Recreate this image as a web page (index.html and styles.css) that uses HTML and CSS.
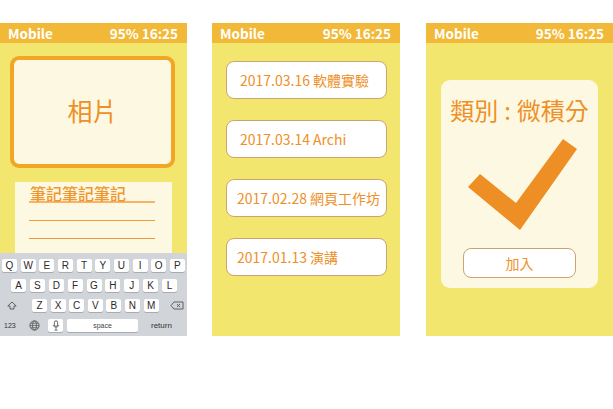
FILE: index.html
```html
<!DOCTYPE html>
<html lang="zh-Hant">
<head>
<meta charset="utf-8">
<title>Mobile screens</title>
<link rel="stylesheet" href="styles.css">
</head>
<body>
<div class="page">
  <section class="phone phone-notes">
    <div class="status"><span>Mobile</span><span>95% 16:25</span></div>
    <div class="photo"><span>相片</span></div>
    <div class="notes">
      <div class="note-line first">筆記筆記筆記</div>
      <div class="note-line"></div>
      <div class="note-line"></div>
    </div>
    <div class="keyboard">
      <div class="kb-row r1">
        <span class="key">Q</span><span class="key">W</span><span class="key">E</span><span class="key">R</span><span class="key">T</span><span class="key">Y</span><span class="key">U</span><span class="key">I</span><span class="key">O</span><span class="key">P</span>
      </div>
      <div class="kb-row r2">
        <span class="key">A</span><span class="key">S</span><span class="key">D</span><span class="key">F</span><span class="key">G</span><span class="key">H</span><span class="key">J</span><span class="key">K</span><span class="key">L</span>
      </div>
      <div class="kb-row r3">
        <svg class="kb-icon shift" width="10" height="9" viewBox="0 0 10 9"><path d="M5 1 L9.2 5 H7 V8 H3 V5 H0.8 Z" fill="none" stroke="#555" stroke-width="0.9" stroke-linejoin="round"/></svg>
        <span class="key">Z</span><span class="key">X</span><span class="key">C</span><span class="key">V</span><span class="key">B</span><span class="key">N</span><span class="key">M</span>
        <svg class="kb-icon del" width="14" height="9" viewBox="0 0 14 9"><path d="M4 1 H13 V8 H4 L1 4.5 Z" fill="none" stroke="#555" stroke-width="0.9" stroke-linejoin="round"/><path d="M7 3 L10 6 M10 3 L7 6" stroke="#555" stroke-width="0.9"/></svg>
      </div>
      <div class="kb-row r4">
        <span class="kb-label num">123</span>
        <svg class="kb-icon globe" width="11" height="11" viewBox="0 0 11 11"><circle cx="5.5" cy="5.5" r="4.6" fill="none" stroke="#555" stroke-width="0.9"/><ellipse cx="5.5" cy="5.5" rx="2" ry="4.6" fill="none" stroke="#555" stroke-width="0.8"/><path d="M1 5.5 H10 M1.8 3.3 H9.2 M1.8 7.7 H9.2" stroke="#555" stroke-width="0.7"/></svg>
        <span class="key mic"><svg width="8" height="11" viewBox="0 0 8 11"><rect x="2.4" y="0.8" width="3.2" height="5.6" rx="1.6" fill="none" stroke="#555" stroke-width="0.9"/><path d="M1 5 Q4 10 7 5 M4 8 V10 M2.5 10.2 H5.5" fill="none" stroke="#555" stroke-width="0.8"/></svg></span>
        <span class="key space">space</span>
        <span class="kb-label ret">return</span>
      </div>
    </div>
  </section>

  <section class="phone phone-list">
    <div class="status"><span>Mobile</span><span>95% 16:25</span></div>
    <ul class="entries">
      <li class="entry">2017.03.16 軟體實驗</li>
      <li class="entry">2017.03.14 Archi</li>
      <li class="entry entry-tight">2017.02.28 網頁工作坊</li>
      <li class="entry entry-tight">2017.01.13 演講</li>
    </ul>
  </section>

  <section class="phone phone-category">
    <div class="status"><span>Mobile</span><span>95% 16:25</span></div>
    <div class="card">
      <h2 class="cat-title">類別<span class="colon">:</span>微積分</h2>
      <svg class="check" width="157" height="115" viewBox="0 0 157 115"><polygon points="27,62 39,49 75,78 122,14 136,24 79,105" fill="#ee8f25"/></svg>
      <button class="add" type="button">加入</button>
    </div>
  </section>
</div>
</body>
</html>
```

FILE: styles.css
```css
* { box-sizing: border-box; }

body {
  margin: 0;
  background: #ffffff;
  font-family: "Noto Sans CJK TC", "Noto Sans", sans-serif;
}

.page {
  display: flex;
  padding-top: 23px;
  gap: 25px;
}

.phone {
  flex-shrink: 0;
  height: 313px;
  background: #f3e66e;
  display: flex;
  flex-direction: column;
}

.phone-notes { width: 187px; }
.phone-list { width: 188px; }
.phone-category { width: 187px; margin-left: 1px; }

.status {
  height: 20px;
  background: #f2b938;
  color: #ffffff;
  font-weight: 700;
  font-size: 13.5px;
  line-height: 20px;
  display: flex;
  justify-content: space-between;
  align-items: center;
  padding: 0 9px 0 8px;
}

/* Screen 1 */
.photo {
  margin: 13px 12px 0 10px;
  height: 112px;
  border: 4px solid #f2a623;
  border-radius: 9px;
  background: #fcf8e2;
  display: flex;
  align-items: center;
  justify-content: center;
  color: #ee9027;
  font-size: 25px;
  padding-bottom: 4px;
}

.notes {
  margin: 14px 15px 0 15px;
  flex: 1;
  background: #fcf8e2;
  padding: 3px 17px 0 14px;
}

.note-line {
  height: 18px;
  border-bottom: 1px solid #ef9a3a;
}

.note-line.first {
  color: #f0962e;
  font-size: 16px;
  font-weight: 500;
  line-height: 17px;
  padding-left: 1px;
  border-bottom: 2px solid #f5b468;
}

.keyboard {
  height: 83px;
  background: #d1d4d9;
  padding-top: 6px;
  display: flex;
  flex-direction: column;
  gap: 7px;
}

.kb-row {
  height: 13px;
  display: flex;
  align-items: center;
}

.key {
  width: 15px;
  height: 13px;
  background: #ffffff;
  border-radius: 2px;
  box-shadow: 0 1px 0 #a8abb0;
  font-family: "Liberation Sans", Arial, sans-serif;
  font-size: 10px;
  color: #2a2a2a;
  display: flex;
  align-items: center;
  justify-content: center;
  flex-shrink: 0;
}

.r1 { justify-content: space-between; padding: 0 2px 0 2px; }
.r2 { justify-content: space-between; padding: 0 10px 0 11px; }
.r3 { gap: 3.6px; padding-left: 7px; }
.r3 .shift { margin-right: 11.4px; }
.r3 .del { margin-left: 7.4px; }

.kb-icon { display: block; flex-shrink: 0; }

.r4 { padding-left: 4px; }
.kb-label {
  font-family: "Liberation Sans", Arial, sans-serif;
  font-size: 7px;
  color: #333;
}
.num { width: 13px; }
.globe { margin-left: 12px; }
.mic { margin-left: 8px; }
.space { margin-left: 4px; width: 71px; font-size: 7px; color: #444; }
.ret { margin-left: 13px; font-size: 8px; }

/* Screen 2 */
.entries {
  list-style: none;
  margin: 18px 0 0 14px;
  padding: 0;
  display: flex;
  flex-direction: column;
  gap: 21px;
}

.entry {
  width: 161px;
  height: 38px;
  border: 1px solid #cda372;
  border-radius: 8px;
  background: #ffffff;
  padding-left: 13px;
  display: flex;
  align-items: center;
  color: #ee9027;
  font-size: 14px;
  white-space: nowrap;
}

.entry-tight { padding-left: 10px; }

/* Screen 3 */
.card {
  margin: 37px 15px 0 15px;
  height: 208px;
  background: #fcf8e2;
  border-radius: 9px;
  padding-top: 15px;
  display: flex;
  flex-direction: column;
  align-items: center;
}

.cat-title {
  margin: 0;
  font-size: 24px;
  font-weight: 400;
  line-height: 30px;
  color: #ee9027;
  white-space: nowrap;
}

.colon { margin: 0 6px; }

.check {
  display: block;
  align-self: stretch;
}

.add {
  margin-top: 8px;
  width: 113px;
  height: 30px;
  border: 1px solid #cda372;
  border-radius: 8px;
  background: #ffffff;
  color: #ee9027;
  font-family: inherit;
  font-size: 14px;
  padding: 0;
}
```
